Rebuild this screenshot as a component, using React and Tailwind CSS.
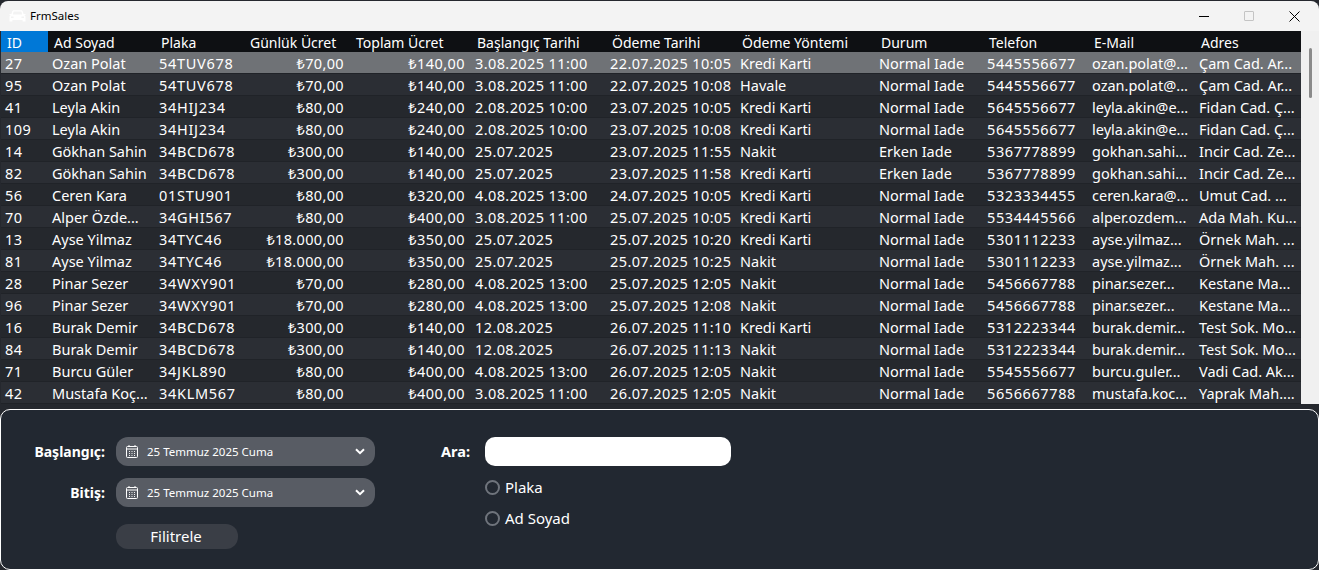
const columns = [
  { title: 'ID', width: 'w-[47px]', track: 'tracking-[0.5px]' },
  { title: 'Ad Soyad', width: 'w-[107px]', track: '' },
  { title: 'Plaka', width: 'w-[89px]', track: 'tracking-[0.7px]' },
  { title: 'Günlük Ücret', width: 'w-[106px]', right: true, track: 'tracking-[0.35px]' },
  { title: 'Toplam Ücret', width: 'w-[121px]', right: true, track: 'tracking-[0.45px]' },
  { title: 'Başlangıç Tarihi', width: 'w-[135px]', track: 'tracking-[0.4px]' },
  { title: 'Ödeme Tarihi', width: 'w-[130px]', track: 'tracking-[0.4px]' },
  { title: 'Ödeme Yöntemi', width: 'w-[139px]', track: '' },
  { title: 'Durum', width: 'w-[108px]', track: '' },
  { title: 'Telefon', width: 'w-[105px]', track: 'tracking-[0.6px]' },
  { title: 'E-Mail', width: 'w-[107px]', track: '' },
  { title: 'Adres', width: 'w-[106px]', track: '' },
];

const rows = [
  ['27', 'Ozan Polat', '54TUV678', '₺70,00', '₺140,00', '3.08.2025 11:00', '22.07.2025 10:05', 'Kredi Karti', 'Normal Iade', '5445556677', 'ozan.polat@...', 'Çam Cad. Ar...'],
  ['95', 'Ozan Polat', '54TUV678', '₺70,00', '₺140,00', '3.08.2025 11:00', '22.07.2025 10:08', 'Havale', 'Normal Iade', '5445556677', 'ozan.polat@...', 'Çam Cad. Ar...'],
  ['41', 'Leyla Akin', '34HIJ234', '₺80,00', '₺240,00', '2.08.2025 10:00', '23.07.2025 10:05', 'Kredi Karti', 'Normal Iade', '5645556677', 'leyla.akin@e...', 'Fidan Cad. Ç...'],
  ['109', 'Leyla Akin', '34HIJ234', '₺80,00', '₺240,00', '2.08.2025 10:00', '23.07.2025 10:08', 'Kredi Karti', 'Normal Iade', '5645556677', 'leyla.akin@e...', 'Fidan Cad. Ç...'],
  ['14', 'Gökhan Sahin', '34BCD678', '₺300,00', '₺140,00', '25.07.2025', '23.07.2025 11:55', 'Nakit', 'Erken Iade', '5367778899', 'gokhan.sahi...', 'Incir Cad. Ze...'],
  ['82', 'Gökhan Sahin', '34BCD678', '₺300,00', '₺140,00', '25.07.2025', '23.07.2025 11:58', 'Kredi Karti', 'Erken Iade', '5367778899', 'gokhan.sahi...', 'Incir Cad. Ze...'],
  ['56', 'Ceren Kara', '01STU901', '₺80,00', '₺320,00', '4.08.2025 13:00', '24.07.2025 10:05', 'Kredi Karti', 'Normal Iade', '5323334455', 'ceren.kara@...', 'Umut Cad. ...'],
  ['70', 'Alper Özde...', '34GHI567', '₺80,00', '₺400,00', '3.08.2025 11:00', '25.07.2025 10:05', 'Kredi Karti', 'Normal Iade', '5534445566', 'alper.ozdem...', 'Ada Mah. Ku...'],
  ['13', 'Ayse Yilmaz', '34TYC46', '₺18.000,00', '₺350,00', '25.07.2025', '25.07.2025 10:20', 'Kredi Karti', 'Normal Iade', '5301112233', 'ayse.yilmaz...', 'Örnek Mah. ...'],
  ['81', 'Ayse Yilmaz', '34TYC46', '₺18.000,00', '₺350,00', '25.07.2025', '25.07.2025 10:25', 'Nakit', 'Normal Iade', '5301112233', 'ayse.yilmaz...', 'Örnek Mah. ...'],
  ['28', 'Pinar Sezer', '34WXY901', '₺70,00', '₺280,00', '4.08.2025 13:00', '25.07.2025 12:05', 'Nakit', 'Normal Iade', '5456667788', 'pinar.sezer...', 'Kestane Ma...'],
  ['96', 'Pinar Sezer', '34WXY901', '₺70,00', '₺280,00', '4.08.2025 13:00', '25.07.2025 12:08', 'Nakit', 'Normal Iade', '5456667788', 'pinar.sezer...', 'Kestane Ma...'],
  ['16', 'Burak Demir', '34BCD678', '₺300,00', '₺140,00', '12.08.2025', '26.07.2025 11:10', 'Kredi Karti', 'Normal Iade', '5312223344', 'burak.demir...', 'Test Sok. Mo...'],
  ['84', 'Burak Demir', '34BCD678', '₺300,00', '₺140,00', '12.08.2025', '26.07.2025 11:13', 'Nakit', 'Normal Iade', '5312223344', 'burak.demir...', 'Test Sok. Mo...'],
  ['71', 'Burcu Güler', '34JKL890', '₺80,00', '₺400,00', '4.08.2025 13:00', '26.07.2025 12:05', 'Nakit', 'Normal Iade', '5545556677', 'burcu.guler...', 'Vadi Cad. Ak...'],
  ['42', 'Mustafa Koç...', '34KLM567', '₺80,00', '₺400,00', '3.08.2025 11:00', '26.07.2025 12:05', 'Nakit', 'Normal Iade', '5656667788', 'mustafa.koc...', 'Yaprak Mah....'],
];

// white car on the light title bar, barely visible in the reference too
function CarIcon() {
  return (
    <svg width="17" height="12" viewBox="0 0 17 12" fill="#fff" className="-ml-px">
      <path d="M3.2 1.5 C3.5 .6 4.2 .2 5.2 .2 H11.8 C12.8 .2 13.5 .6 13.8 1.5 L14.6 4 H16.5 V5 H15.2 C16.2 5.5 16.5 6 16.5 7 V11.5 H13.6 V10 H3.4 V11.5 H.5 V7 C.5 6 .8 5.5 1.8 5 H.5 V4 H2.4 Z" />
      <path d="M4.6 1.6 H12.4 L13.1 4.4 H3.9 Z" fill="#f3f3f3" />
      <path d="M2 6.6 H4.6 V8 H2 Z M12.4 6.6 H15 V8 H12.4 Z" fill="#f3f3f3" />
    </svg>
  );
}

// square calendar with two rings and a dot grid
function CalendarIcon() {
  return (
    <svg width="12" height="13" viewBox="0 0 12 13" fill="none" stroke="#fff" strokeWidth="1" className="shrink-0">
      <rect x=".5" y="1.5" width="11" height="11" rx="1" />
      <path d="M.5 4 H11.5 M3 0 V2 M9 0 V2" />
      <path d="M3 6.5 H4 M5.5 6.5 H6.5 M8 6.5 H9 M3 8.5 H4 M5.5 8.5 H6.5 M8 8.5 H9 M3 10.5 H4 M5.5 10.5 H6.5 M8 10.5 H9" strokeWidth=".9" />
    </svg>
  );
}

function Chevron() {
  return (
    <svg width="10" height="7" viewBox="0 0 10 7" fill="none" stroke="#fff" strokeWidth="2" className="shrink-0">
      <path d="M1 1.2 L5 5.2 L9 1.2" />
    </svg>
  );
}

function DateField() {
  return (
    <div className="flex h-[29px] w-[259px] items-center rounded-[12px] bg-[#585c64] pl-[10px] pr-[10px] text-[11.5px] text-white">
      <CalendarIcon />
      <span className="ml-[9px] flex-1">25 Temmuz 2025 Cuma</span>
      <Chevron />
    </div>
  );
}

function Radio({ label }) {
  return (
    <div className="flex h-[16px] items-center gap-[5px] text-[15px] text-white">
      <span className="h-[15px] w-[15px] rounded-full border-2 border-[#6f747c]" />
      {label}
    </div>
  );
}

export default function App() {
  return (
    <div className="flex h-[570px] w-[1319px] flex-col overflow-hidden bg-[#25282e] pt-px font-['Noto_Sans',sans-serif]">
      <div className="flex h-[30px] shrink-0 items-center rounded-t-[8px] bg-[#f3f3f3] pl-[10px]">
        <CarIcon />
        <span className="ml-[4px] text-[11.5px] text-black">FrmSales</span>
        <div className="ml-auto flex items-center gap-[35px] pr-[19px]">
          <span className="h-px w-[10px] bg-black" />
          <span className="h-[10px] w-[10px] rounded-[1px] border border-[#c4c4c4]" />
          <svg width="11" height="11" viewBox="0 0 11 11" stroke="#000" strokeWidth="1">
            <path d="M.5 .5 L10.5 10.5 M10.5 .5 L.5 10.5" />
          </svg>
        </div>
      </div>

      <div className="flex h-[373px] shrink-0 pl-px">
        <div className="w-[1300px] text-[14.5px] text-white">
          <div className="flex h-[21px] bg-[#0e1013] text-[14px]">
            {columns.map((col, i) => (
              <div
                key={col.title}
                className={`${col.width} shrink-0 whitespace-nowrap pl-[6px] leading-[23px] ${i === 0 ? 'bg-[#0078d7]' : ''}`}
              >
                {col.title}
              </div>
            ))}
          </div>
          {rows.map((row, r) => (
            <div
              key={row[0]}
              className={`flex h-[22px] border-b border-[#202328] ${r === 0 ? 'bg-[#6f7276]' : r % 2 ? 'bg-[#2b2e34]' : 'bg-[#25282d]'}`}
            >
              {row.map((cell, i) => (
                <div
                  key={i}
                  className={`${columns[i].width} ${columns[i].track} shrink-0 overflow-hidden whitespace-nowrap leading-[23px] ${columns[i].right ? 'pr-[6px] text-right' : 'pl-[4px]'}`}
                >
                  {cell}
                </div>
              ))}
            </div>
          ))}
        </div>
        <div className="relative flex-1 bg-[#f0f0f0]">
          <span className="absolute left-[8px] top-[17px] h-[50px] w-[3px] rounded-full bg-[#8a8a8a]" />
        </div>
      </div>

      <div className="mt-[5px] flex h-[161px] shrink-0 rounded-[10px] border border-white bg-[#222831]">
        <div className="flex flex-col pl-[32px] pt-[27px]">
          <div className="flex items-center gap-[11px]">
            <span className="w-[72px] text-right text-[14px] font-bold leading-[19px] text-white">Başlangıç:</span>
            <DateField />
          </div>
          <div className="mt-[12px] flex items-center gap-[11px]">
            <span className="w-[72px] text-right text-[14px] font-bold leading-[19px] text-white">Bitiş:</span>
            <DateField />
          </div>
          <div className="ml-[83px] mt-[17px] flex h-[25px] w-[122px] items-center justify-center rounded-[12px] bg-[#3a3e46] pr-[2px] text-[15px] text-white">
            Filitrele
          </div>
        </div>
        <div className="ml-[66px] flex flex-col pt-[27px]">
          <div className="flex items-center gap-[15px]">
            <span className="text-[14.5px] font-bold text-white">Ara:</span>
            <div className="h-[29px] w-[246px] rounded-[10px] bg-white" />
          </div>
          <div className="ml-[44px] mt-[13px] flex flex-col gap-[15px]">
            <Radio label="Plaka" />
            <Radio label="Ad Soyad" />
          </div>
        </div>
      </div>
    </div>
  );
}
